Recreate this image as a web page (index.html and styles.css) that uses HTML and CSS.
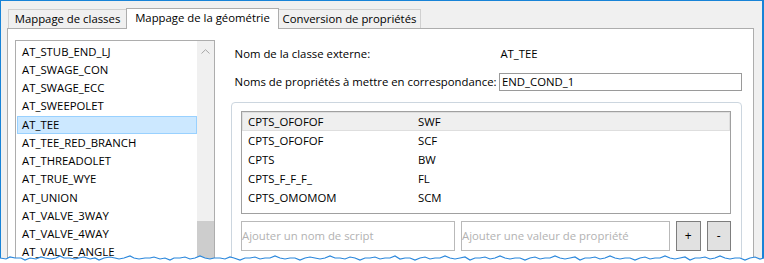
FILE: index.html
```html
<!DOCTYPE html>
<html lang="fr">
<head>
<meta charset="utf-8">
<title>Mappage de la géométrie</title>
<link rel="stylesheet" href="styles.css">
</head>
<body>
<div class="frame">
  <div class="window">
    <div class="tabs">
      <div class="tab t1">Mappage de classes</div>
      <div class="tab active t2">Mappage de la géométrie</div>
      <div class="tab t3">Conversion de propriétés</div>
    </div>
    <div class="panel">
      <div class="listbox">
        <ul class="items">
          <li>AT_STUB_END_LJ</li>
          <li>AT_SWAGE_CON</li>
          <li>AT_SWAGE_ECC</li>
          <li>AT_SWEEPOLET</li>
          <li class="selected">AT_TEE</li>
          <li>AT_TEE_RED_BRANCH</li>
          <li>AT_THREADOLET</li>
          <li>AT_TRUE_WYE</li>
          <li>AT_UNION</li>
          <li>AT_VALVE_3WAY</li>
          <li>AT_VALVE_4WAY</li>
          <li>AT_VALVE_ANGLE</li>
        </ul>
        <div class="vscroll">
          <div class="arrow">
            <svg width="9" height="5" viewBox="0 0 9 5"><polyline points="0.5,4.5 4.5,0.7 8.5,4.5" fill="none" stroke="#a6a6a6" stroke-width="1"/></svg>
          </div>
          <div class="thumb"></div>
        </div>
      </div>
      <div class="details">
        <div class="fields">
          <span class="lbl">Nom de la classe externe:</span>
          <span class="val">AT_TEE</span>
          <span class="lbl">Noms de propriétés à mettre en correspondance:</span>
          <input class="txt" type="text" value="END_COND_1">
        </div>
        <div class="group">
          <div class="table">
            <div class="row sel"><span class="c1">CPTS_OFOFOF</span><span class="c2">SWF</span></div>
            <div class="row"><span class="c1">CPTS_OFOFOF</span><span class="c2">SCF</span></div>
            <div class="row"><span class="c1">CPTS</span><span class="c2">BW</span></div>
            <div class="row"><span class="c1">CPTS_F_F_F_</span><span class="c2">FL</span></div>
            <div class="row"><span class="c1">CPTS_OMOMOM</span><span class="c2">SCM</span></div>
          </div>
          <div class="addrow">
            <input class="add a1" type="text" placeholder="Ajouter un nom de script">
            <input class="add a2" type="text" placeholder="Ajouter une valeur de propriété">
            <button class="btn" type="button">+</button>
            <button class="btn" type="button">-</button>
          </div>
        </div>
      </div>
    </div>
  </div>
  <svg class="torn" width="764" height="14" viewBox="0 0 764 14">
    <path fill="#ffffff" d="M0,9 L6,10 L10,8 L15,9 L21,9 L25,11 L30,9 L36,10 L41,8 L45,9 L51,10 L56,9 L60,7 L64,9 L70,9 L75,10 L79,9 L84,8 L90,10 L95,9 L99,11 L104,9 L110,8 L115,9 L119,10 L124,9 L130,7 L134,9 L139,10 L145,9 L150,9 L154,8 L160,10 L165,9 L170,11 L174,9 L180,9 L185,8 L190,10 L195,9 L200,7 L205,9 L210,10 L214,9 L220,9 L225,10 L230,8 L234,9 L240,11 L245,9 L250,9 L255,8 L260,10 L265,9 L270,9 L275,7 L280,9 L285,10 L290,9 L295,9 L300,11 L305,9 L310,8 L315,9 L320,10 L325,9 L330,7 L335,9 L340,9 L345,10 L350,8 L355,9 L360,11 L365,9 L370,9 L375,8 L380,10 L385,9 L390,9 L395,7 L400,10 L405,9 L410,9 L415,11 L420,9 L425,8 L430,10 L435,9 L440,9 L445,7 L450,9 L455,10 L460,9 L465,8 L470,11 L475,9 L480,9 L485,8 L490,10 L495,9 L500,7 L505,9 L510,10 L515,9 L520,9 L525,11 L530,9 L535,8 L540,10 L545,9 L550,9 L555,7 L560,9 L565,10 L570,9 L575,8 L580,11 L585,9 L590,9 L595,8 L600,10 L605,9 L610,7 L615,9 L620,10 L625,9 L630,9 L635,11 L640,9 L645,8 L650,10 L655,9 L660,9 L665,7 L670,9 L675,10 L680,9 L685,8 L690,11 L695,9 L700,9 L705,8 L710,10 L715,9 L720,7 L725,9 L730,10 L735,9 L740,9 L745,11 L750,9 L755,8 L760,10 L764,9 L764,14 L0,14 Z"/>
    <polyline fill="none" stroke="#2a87dc" stroke-width="1.2" points="0,9 6,10 10,8 15,9 21,9 25,11 30,9 36,10 41,8 45,9 51,10 56,9 60,7 64,9 70,9 75,10 79,9 84,8 90,10 95,9 99,11 104,9 110,8 115,9 119,10 124,9 130,7 134,9 139,10 145,9 150,9 154,8 160,10 165,9 170,11 174,9 180,9 185,8 190,10 195,9 200,7 205,9 210,10 214,9 220,9 225,10 230,8 234,9 240,11 245,9 250,9 255,8 260,10 265,9 270,9 275,7 280,9 285,10 290,9 295,9 300,11 305,9 310,8 315,9 320,10 325,9 330,7 335,9 340,9 345,10 350,8 355,9 360,11 365,9 370,9 375,8 380,10 385,9 390,9 395,7 400,10 405,9 410,9 415,11 420,9 425,8 430,10 435,9 440,9 445,7 450,9 455,10 460,9 465,8 470,11 475,9 480,9 485,8 490,10 495,9 500,7 505,9 510,10 515,9 520,9 525,11 530,9 535,8 540,10 545,9 550,9 555,7 560,9 565,10 570,9 575,8 580,11 585,9 590,9 595,8 600,10 605,9 610,7 615,9 620,10 625,9 630,9 635,11 640,9 645,8 650,10 655,9 660,9 665,7 670,9 675,10 680,9 685,8 690,11 695,9 700,9 705,8 710,10 715,9 720,7 725,9 730,10 735,9 740,9 745,11 750,9 755,8 760,10 764,9"/>
  </svg>
</div>
</body>
</html>
```
FILE: styles.css
```css
html, body {
  margin: 0;
  padding: 0;
  background: #ffffff;
}

body {
  width: 764px;
  height: 263px;
  overflow: hidden;
  font-family: "Open Sans", "Noto Sans", sans-serif;
  font-size: 11.35px;
  color: #000000;
}

.frame {
  position: relative;
  width: 764px;
  height: 263px;
  overflow: hidden;
}

.window {
  box-sizing: border-box;
  width: 764px;
  height: 300px;
  background: #f0f0f0;
  border-top: 1px solid #1883d7;
  border-left: 1px solid #1883d7;
  border-right: 2px solid #1883d7;
  padding: 7px 8px 0 6px;
}

/* ---------- tabs ---------- */
.tabs {
  display: flex;
  align-items: flex-start;
  height: 21px;
  padding-left: 1px;
  margin-bottom: -1px;
  position: relative;
  z-index: 1;
}

.tab {
  box-sizing: border-box;
  display: flex;
  justify-content: center;
  height: 19px;
  margin-top: 1px;
  line-height: 18px;
  background: #f0f0f0;
  border: 1px solid #d0d0d0;
  border-bottom: none;
  white-space: nowrap;
}

.t1 { width: 118px; border-right: none; }
.t2 { width: 153px; }
.t3 { width: 142px; border-left: none; }

.tab.active {
  height: 21px;
  margin-top: 0;
  background: #ffffff;
  border-color: #adadad;
}

/* ---------- panel ---------- */
.panel {
  display: flex;
  align-items: flex-start;
  height: 280px;
  background: #ffffff;
  border: 1px solid #adadad;
  padding-top: 11px;
}

.listbox {
  box-sizing: border-box;
  display: flex;
  width: 200px;
  height: 260px;
  margin-left: 7px;
  border: 1px solid #adadad;
}

.items {
  flex: 1;
  list-style: none;
  margin: 0;
  padding: 1.5px 0 0;
}

.items li {
  height: 18.27px;
  line-height: 18.27px;
  padding-left: 6px;
  white-space: nowrap;
}

.items li.selected {
  margin-left: 1px;
  padding-left: 5px;
  background: #cce8ff;
  box-shadow: inset 0 0 0 1px #99d1ff;
}

.vscroll {
  display: flex;
  flex-direction: column;
  align-items: center;
  width: 17px;
  background: #f0f0f0;
}

.arrow {
  height: 17px;
  padding-top: 8px;
  box-sizing: border-box;
  display: flex;
  justify-content: center;
}

.arrow svg { display: block; }

.thumb {
  width: 17px;
  height: 70px;
  margin-top: 163px;
  background: #cdcdcd;
}

/* ---------- details ---------- */
.details {
  flex: 1;
  margin-left: 16px;
  margin-right: 11px;
  padding-top: 4.6px;
}

.fields {
  display: grid;
  grid-template-columns: 264.4px 1fr;
  grid-auto-rows: 18px;
  row-gap: 10px;
  align-items: center;
  padding-left: 3.6px;
}

.lbl, .val {
  line-height: 18px;
  white-space: nowrap;
}

.val { padding-left: 1.4px; }

.txt {
  box-sizing: border-box;
  width: 100%;
  height: 18px;
  margin: 0;
  padding: 0 2px;
  border: 1px solid #9a9a9a;
  font: inherit;
  color: #000000;
  background: #ffffff;
  outline: none;
}

.group {
  margin-top: 11.2px;
  height: 200px;
  border: 1px solid #ccd6df;
  border-radius: 4px;
  padding: 8.3px 10px 0 9px;
}

.table {
  box-sizing: border-box;
  height: 102.7px;
  border: 1px solid #a0a0a0;
}

.row {
  display: flex;
  height: 19.1px;
  line-height: 19.1px;
  white-space: nowrap;
}

.row.sel {
  background: #efefef;
  box-shadow: inset 0 0 0 1px #dedede;
}

.c1 {
  width: 170px;
  padding-left: 6px;
}

.addrow {
  display: flex;
  gap: 6px;
  margin-top: 7px;
  height: 30px;
}

.add {
  box-sizing: border-box;
  height: 30px;
  margin: 0;
  padding: 0;
  border: 1px solid #b9b9b9;
  font: inherit;
  background: #ffffff;
  outline: none;
}

.add::placeholder { color: #b2b2b2; opacity: 1; }

.a1 { width: 214px; }
.a2 { flex: 1; min-width: 0; }

.btn {
  box-sizing: border-box;
  width: 24.5px;
  height: 30px;
  margin: 0;
  padding: 0;
  border: 1px solid #7d7d7d;
  background: #e1e1e1;
  font-family: inherit;
  font-size: 12px;
  color: #000000;
}

/* torn screenshot edge */
.torn {
  position: absolute;
  left: 0;
  top: 249px;
  display: block;
}
```
